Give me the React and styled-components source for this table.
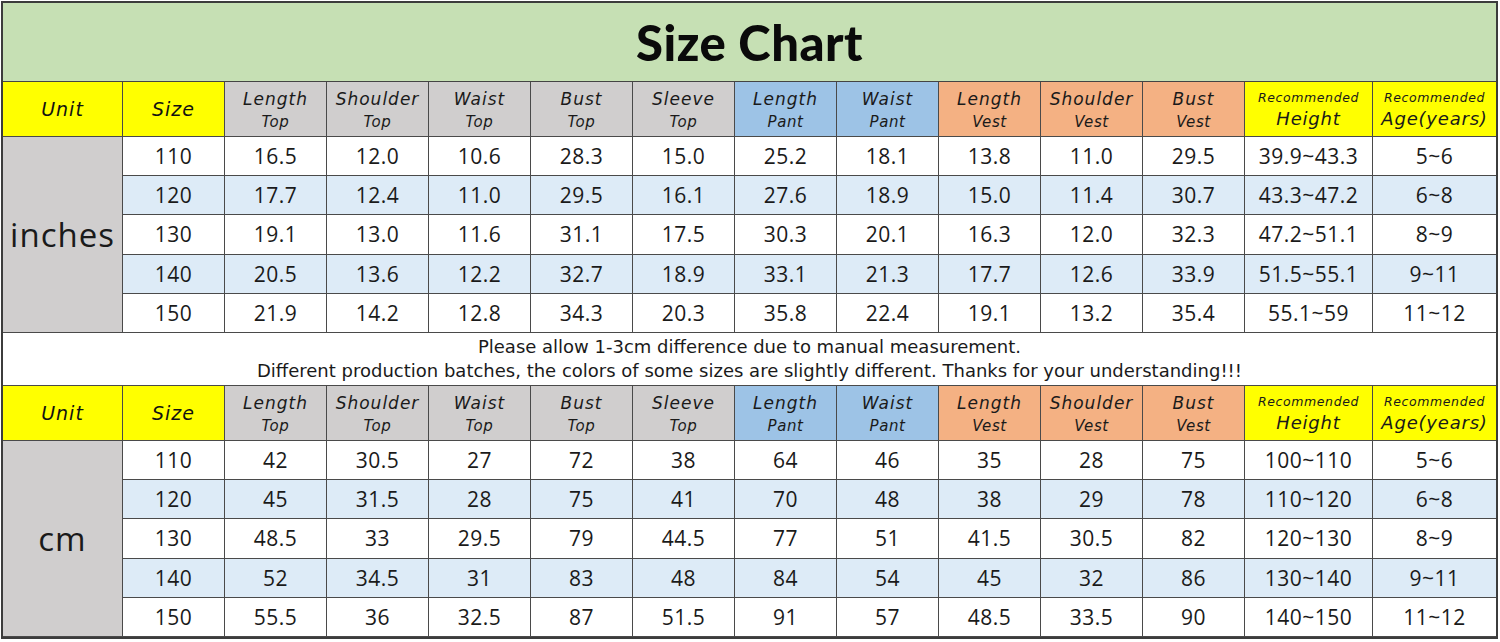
import styled, { createGlobalStyle } from "styled-components";

const GlobalStyle = createGlobalStyle`
  html, body {
    margin: 0;
    padding: 0;
    background: #ffffff;
  }
  * {
    box-sizing: border-box;
  }
`;

const tones = {
  yellow: "#ffff00",
  gray: "#d0cece",
  blue: "#9dc3e6",
  orange: "#f4b183",
};

const Chart = styled.div`
  margin: 1px 0 0 1px;
  width: 1497px;
  border: 2px solid #3c3c3c;
  background: #ffffff;
  color: #111;
`;

const Title = styled.h1`
  margin: 0;
  height: 79px;
  display: flex;
  align-items: center;
  justify-content: center;
  background: #c6e0b4;
  border-bottom: 1px solid #444;
  font-family: Lato, "Open Sans", sans-serif;
  font-weight: 900;
  font-size: 49px;
  letter-spacing: 0.5px;
  color: #0a0a0a;
`;

const Table = styled.div`
  display: grid;
  grid-template-columns: 120px repeat(11, 102px) 128px 1fr;
  grid-template-rows: 55px repeat(5, 39.2px);
`;

const Cell = styled.div`
  display: flex;
  align-items: center;
  justify-content: center;
  border-right: 1px solid #4a4a4a;
  border-bottom: 1px solid #4a4a4a;
  background: ${({ $bg }) => $bg || "#ffffff"};
  &:nth-child(14n) {
    border-right: none;
  }
`;

const HeadCell = styled(Cell)`
  flex-direction: column;
  gap: ${({ $rec }) => ($rec ? "5px" : "5px")};
  padding-top: 2px;
  font-family: "DejaVu Sans", sans-serif;
  font-style: italic;
  color: #1a1a1a;
`;

const HeadMain = styled.span`
  font-size: ${({ $small }) => ($small ? "12.5px" : "17px")};
  letter-spacing: ${({ $small }) => ($small ? "0.6px" : "1px")};
  line-height: 1.1;
`;

const HeadSub = styled.span`
  font-size: ${({ $big }) => ($big ? "18px" : "15px")};
  letter-spacing: ${({ $big }) => ($big ? "0.8px" : "0.6px")};
  line-height: 1.1;
`;

const UnitHead = styled(Cell)`
  font-family: "DejaVu Sans", sans-serif;
  font-style: italic;
  font-size: 19px;
  letter-spacing: 1px;
`;

const UnitCell = styled(Cell)`
  grid-row: 2 / span 5;
  grid-column: 1;
  background: #d0cece;
  font-family: "Open Sans", sans-serif;
  font-size: 33px;
  letter-spacing: 1px;
  color: #1a1a1a;
`;

const DataCell = styled(Cell)`
  font-family: "Open Sans", sans-serif;
  font-size: 21px;
  letter-spacing: 0.5px;
  color: #1a1a1a;
  background: ${({ $alt }) => ($alt ? "#ddebf7" : "#ffffff")};
  &:nth-child(n) {
    border-right: ${({ $last }) => ($last ? "none" : "1px solid #4a4a4a")};
  }
`;

const Notes = styled.div`
  height: 53px;
  display: flex;
  flex-direction: column;
  align-items: center;
  justify-content: center;
  border-bottom: 1px solid #4a4a4a;
  font-family: "DejaVu Sans", sans-serif;
  font-size: 18px;
  line-height: 24px;
  color: #1a1a1a;
`;

const columns = [
  { main: "Length", sub: "Top", tone: "gray" },
  { main: "Shoulder", sub: "Top", tone: "gray" },
  { main: "Waist", sub: "Top", tone: "gray" },
  { main: "Bust", sub: "Top", tone: "gray" },
  { main: "Sleeve", sub: "Top", tone: "gray" },
  { main: "Length", sub: "Pant", tone: "blue" },
  { main: "Waist", sub: "Pant", tone: "blue" },
  { main: "Length", sub: "Vest", tone: "orange" },
  { main: "Shoulder", sub: "Vest", tone: "orange" },
  { main: "Bust", sub: "Vest", tone: "orange" },
  { main: "Recommended", sub: "Height", tone: "yellow", rec: true },
  { main: "Recommended", sub: "Age(years)", tone: "yellow", rec: true },
];

const inches = [
  ["110", "16.5", "12.0", "10.6", "28.3", "15.0", "25.2", "18.1", "13.8", "11.0", "29.5", "39.9~43.3", "5~6"],
  ["120", "17.7", "12.4", "11.0", "29.5", "16.1", "27.6", "18.9", "15.0", "11.4", "30.7", "43.3~47.2", "6~8"],
  ["130", "19.1", "13.0", "11.6", "31.1", "17.5", "30.3", "20.1", "16.3", "12.0", "32.3", "47.2~51.1", "8~9"],
  ["140", "20.5", "13.6", "12.2", "32.7", "18.9", "33.1", "21.3", "17.7", "12.6", "33.9", "51.5~55.1", "9~11"],
  ["150", "21.9", "14.2", "12.8", "34.3", "20.3", "35.8", "22.4", "19.1", "13.2", "35.4", "55.1~59", "11~12"],
];

const cm = [
  ["110", "42", "30.5", "27", "72", "38", "64", "46", "35", "28", "75", "100~110", "5~6"],
  ["120", "45", "31.5", "28", "75", "41", "70", "48", "38", "29", "78", "110~120", "6~8"],
  ["130", "48.5", "33", "29.5", "79", "44.5", "77", "51", "41.5", "30.5", "82", "120~130", "8~9"],
  ["140", "52", "34.5", "31", "83", "48", "84", "54", "45", "32", "86", "130~140", "9~11"],
  ["150", "55.5", "36", "32.5", "87", "51.5", "91", "57", "48.5", "33.5", "90", "140~150", "11~12"],
];

function SizeTable({ unit, rows }) {
  return (
    <Table>
      <UnitHead $bg={tones.yellow}>Unit</UnitHead>
      <UnitHead $bg={tones.yellow}>Size</UnitHead>
      {columns.map((c, i) => (
        <HeadCell key={i} $bg={tones[c.tone]} $rec={c.rec}>
          <HeadMain $small={c.rec}>{c.main}</HeadMain>
          <HeadSub $big={c.rec}>{c.sub}</HeadSub>
        </HeadCell>
      ))}
      <UnitCell>{unit}</UnitCell>
      {rows.map((row, r) =>
        row.map((v, i) => (
          <DataCell key={r + "-" + i} $alt={r % 2 === 1} $last={i === row.length - 1}>
            {v}
          </DataCell>
        ))
      )}
    </Table>
  );
}

export default function App() {
  return (
    <>
      <GlobalStyle />
      <Chart>
        <Title>Size Chart</Title>
        <SizeTable unit="inches" rows={inches} />
        <Notes>
          <span>Please allow 1-3cm difference due to manual measurement.</span>
          <span>
            Different production batches, the colors of some sizes are slightly different. Thanks for your
            understanding!!!
          </span>
        </Notes>
        <SizeTable unit="cm" rows={cm} />
      </Chart>
    </>
  );
}
